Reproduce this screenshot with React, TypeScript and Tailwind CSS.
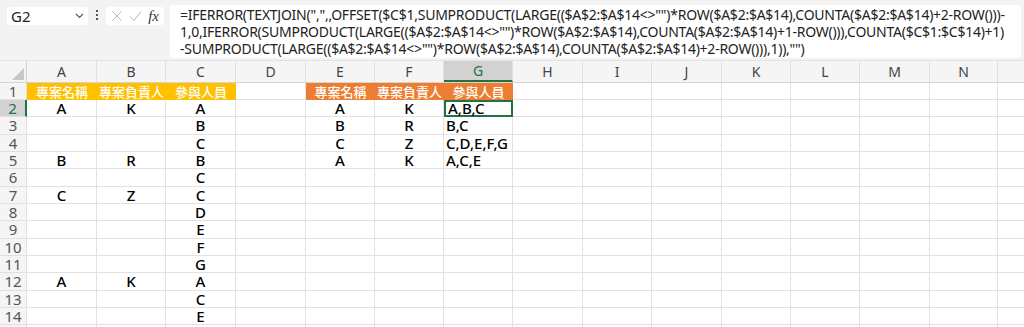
import React from "react";

const cols = [
  { l: "A", w: "w-[70px]" },
  { l: "B", w: "w-[69px]" },
  { l: "C", w: "w-[70px]" },
  { l: "D", w: "w-[70px]" },
  { l: "E", w: "w-[69px]" },
  { l: "F", w: "w-[69px]" },
  { l: "G", w: "w-[69px]" },
  { l: "H", w: "w-[70px]" },
  { l: "I", w: "w-[69px]" },
  { l: "J", w: "w-[70px]" },
  { l: "K", w: "w-[69px]" },
  { l: "L", w: "w-[69px]" },
  { l: "M", w: "w-[70px]" },
  { l: "N", w: "w-[68px]" },
  { l: "", w: "w-[40px]" },
];

const rowH = ["h-[17px]", "h-[17px]", "h-[18px]", "h-[17px]", "h-[17px]", "h-[18px]", "h-[17px]", "h-[17px]", "h-[18px]", "h-[17px]", "h-[17px]", "h-[18px]", "h-[17px]", "h-[17px]", "h-[17px]"];

const data: Record<number, Record<string, string>> = {
  2: { A: "A", B: "K", C: "A", E: "A", F: "K", G: "A,B,C" },
  3: { C: "B", E: "B", F: "R", G: "B,C" },
  4: { C: "C", E: "C", F: "Z", G: "C,D,E,F,G" },
  5: { A: "B", B: "R", C: "B", E: "A", F: "K", G: "A,C,E" },
  6: { C: "C" },
  7: { A: "C", B: "Z", C: "C" },
  8: { C: "D" },
  9: { C: "E" },
  10: { C: "F" },
  11: { C: "G" },
  12: { A: "A", B: "K", C: "A" },
  13: { C: "C" },
  14: { C: "E" },
};

const hdr1: Record<string, string> = { A: "專案名稱", B: "專案負責人", C: "參與人員" };
const hdr2: Record<string, string> = { E: "專案名稱", F: "專案負責人", G: "參與人員" };

const font = { fontFamily: '"Noto Sans", "Noto Sans CJK TC", sans-serif' };
const cjk = { fontFamily: '"Noto Sans CJK TC", sans-serif' };

export default function App() {
  return (
    <div className="w-[1024px] h-[327px] overflow-hidden bg-white text-[#222]" style={font}>
      {/* top bar */}
      <div className="h-[61px] bg-[#f3f3f3] flex items-start border-b border-[#e3e3e3]">
        <div className="ml-[7px] mt-[7px] w-[81px] h-[18px] bg-white rounded-[3px] flex items-center justify-between pl-[4px] pr-[4px]">
          <span className="text-[15px] leading-none text-[#222]">G2</span>
          <svg width="9" height="6" viewBox="0 0 9 6"><path d="M1 1l3.5 3.5L8 1" fill="none" stroke="#555" strokeWidth="1.1" /></svg>
        </div>
        <div className="w-[18px] mt-[10px] flex flex-col items-center gap-[2px]">
          <span className="w-[2px] h-[2px] bg-[#555]" />
          <span className="w-[2px] h-[2px] bg-[#555]" />
          <span className="w-[2px] h-[2px] bg-[#555]" />
        </div>
        <div className="mt-[7px] w-[58px] h-[18px] bg-white rounded-[3px] flex items-center justify-between px-[5px]">
          <svg width="12" height="12" viewBox="0 0 12 12"><path d="M1.5 1.5l9 9M10.5 1.5l-9 9" stroke="#b5b5b5" strokeWidth="1" /></svg>
          <svg width="13" height="12" viewBox="0 0 13 12"><path d="M1 6.5l4 4L12 1.5" fill="none" stroke="#b5b5b5" strokeWidth="1" /></svg>
          <span className="text-[15px] leading-none italic text-[#333]" style={{ fontFamily: '"Liberation Serif", serif' }}>fx</span>
        </div>
        <div className="ml-[6px] mt-[5px] w-[851px] h-[53px] bg-white rounded-[3px] pl-[10px] pt-[1px] text-[14px] leading-[17px] text-[#222] tracking-[-0.25px] whitespace-pre">
          <div>=IFERROR(TEXTJOIN(",",,OFFSET($C$1,SUMPRODUCT(LARGE(($A$2:$A$14{"<>"}"")*ROW($A$2:$A$14),COUNTA($A$2:$A$14)+2-ROW()))-</div>
          <div>1,0,IFERROR(SUMPRODUCT(LARGE(($A$2:$A$14{"<>"}"")*ROW($A$2:$A$14),COUNTA($A$2:$A$14)+1-ROW())),COUNTA($C$1:$C$14)+1)</div>
          <div>-SUMPRODUCT(LARGE(($A$2:$A$14{"<>"}"")*ROW($A$2:$A$14),COUNTA($A$2:$A$14)+2-ROW())),1)),"")</div>
        </div>
      </div>
      {/* column headers */}
      <div className="flex h-[22px] bg-[#f5f5f5] border-b border-[#d4d4d4]">
        <div className="w-[27px] shrink-0 border-r border-[#d4d4d4] flex items-end justify-end pr-[2px] pb-[2px]">
          <svg width="12" height="12" viewBox="0 0 12 12"><path d="M12 0V12H0Z" fill="#c8c8c8" /></svg>
        </div>
        {cols.map((c) => (
          <div
            key={c.l + "h"}
            className={`${c.w} shrink-0 flex items-center justify-center text-[14px] border-r border-[#e0e0e0] ${c.l === "G" ? "bg-[#d2d2d2] text-[#217346] border-b-2 border-b-[#217346]" : "text-[#444]"}`}
          >
            {c.l}
          </div>
        ))}
      </div>
      {/* rows */}
      {rowH.map((h, i) => {
        const r = i + 1;
        return (
          <div key={r} className={`flex ${h}`}>
            <div
              className={`w-[27px] shrink-0 flex items-center justify-center text-[15px] leading-none border-b border-[#e0e0e0] ${r === 2 ? "bg-[#d2d2d2] text-[#217346] border-r-2 border-r-[#217346]" : "bg-[#f5f5f5] text-[#555] border-r border-[#d4d4d4]"}`}
            >
              {r}
            </div>
            {cols.map((c) => {
              if (r === 1 && hdr1[c.l]) {
                return (
                  <div key={c.l} className={`${c.w} shrink-0 bg-[#ffc000] text-white text-[13px] leading-none font-medium flex items-center justify-center whitespace-nowrap overflow-hidden`} style={cjk}>
                    {hdr1[c.l]}
                  </div>
                );
              }
              if (r === 1 && hdr2[c.l]) {
                return (
                  <div key={c.l} className={`${c.w} shrink-0 bg-[#ed7d31] text-white text-[13px] leading-none font-medium flex items-center justify-center whitespace-nowrap overflow-hidden`} style={cjk}>
                    {hdr2[c.l]}
                  </div>
                );
              }
              const v = data[r]?.[c.l] ?? "";
              const sel = r === 2 && c.l === "G";
              return (
                <div
                  key={c.l}
                  className={`${c.w} shrink-0 text-[15px] leading-none font-medium text-black flex items-center whitespace-nowrap ${c.l === "G" ? "justify-start pl-[2px]" : "justify-center"} ${sel ? "border-2 border-[#217346]" : "border-r border-b border-[#e2e2e2]"}`}
                >
                  {v}
                </div>
              );
            })}
          </div>
        );
      })}
    </div>
  );
}
